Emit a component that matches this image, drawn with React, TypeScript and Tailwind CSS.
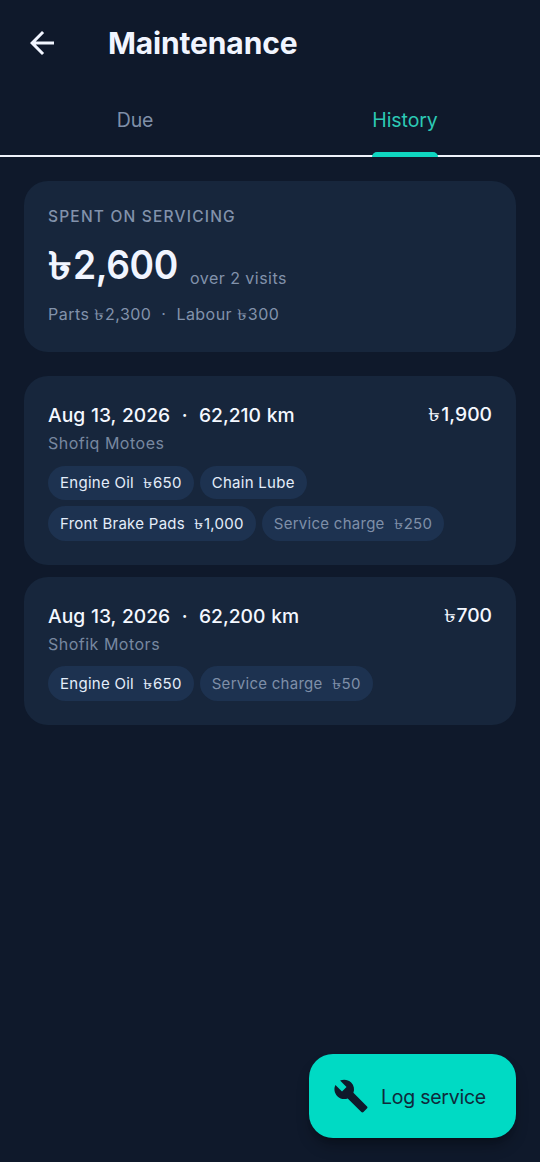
import { MdArrowBack, MdBuild } from "react-icons/md";
import clsx from "clsx";

interface ServiceItem {
  name: string;
  cost?: string;
  muted?: boolean;
}

interface Visit {
  date: string;
  odometer: string;
  garage: string;
  total: string;
  items: ServiceItem[];
}

const VISITS: Visit[] = [
  {
    date: "Aug 13, 2026",
    odometer: "62,210 km",
    garage: "Shofiq Motoes",
    total: "1,900",
    items: [
      { name: "Engine Oil", cost: "650" },
      { name: "Chain Lube" },
      { name: "Front Brake Pads", cost: "1,000" },
      { name: "Service charge", cost: "250", muted: true },
    ],
  },
  {
    date: "Aug 13, 2026",
    odometer: "62,200 km",
    garage: "Shofik Motors",
    total: "700",
    items: [
      { name: "Engine Oil", cost: "650" },
      { name: "Service charge", cost: "50", muted: true },
    ],
  },
];

// The fallback taka sign is narrow and tall, so it is widened to sit with the digits.
const Taka = ({ amount }: { amount: string }) => (
  <>
    <span className="inline-block w-[0.67em] origin-[0_75%] scale-x-[1.3] scale-y-[0.96]">
      ৳
    </span>
    {amount}
  </>
);

const ItemPill = ({ name, cost, muted }: ServiceItem) => (
  <span
    className={clsx(
      "flex items-center rounded-full bg-[#1d3250] px-3 text-[15px] tracking-[0.27px]",
      cost ? "h-[34.5px] pt-px" : "h-[33px] pt-[2px]",
      muted ? "text-[#7f8fa8]" : "text-[#e4edfa]"
    )}
  >
    <span className="whitespace-pre">
      {name}
      {cost && (
        <>
          {"  "}
          <Taka amount={cost} />
        </>
      )}
    </span>
  </span>
);

const VisitCard = ({ visit }: { visit: Visit }) => (
  <article className="rounded-3xl bg-[#17263c] p-6">
    <div className="flex items-start justify-between text-[19.25px] leading-[30px] font-medium text-[#f4f8ff]">
      <h2 className="whitespace-pre [word-spacing:0.6px]">
        {visit.date}  ·  {visit.odometer}
      </h2>
      <span className="leading-7">
        <Taka amount={visit.total} />
      </span>
    </div>
    <p className="text-[16px] leading-[27px] tracking-[0.5px] text-[#7888a0]">
      {visit.garage}
    </p>
    <div className="mt-[8.5px] flex flex-wrap items-start gap-1.5">
      {visit.items.map((item) => (
        <ItemPill key={item.name} {...item} />
      ))}
    </div>
  </article>
);

export default function App() {
  return (
    <div className="relative flex h-[1162px] w-[540px] flex-col overflow-hidden bg-[#0f192b] font-['Inter','Noto_Sans',sans-serif]">
      <header className="flex h-[84px] items-center pl-6">
        <button aria-label="Back" className="pt-px text-[#f1f5ff]">
          <MdArrowBack className="size-9" />
        </button>
        <h1 className="ml-12 pt-[2px] text-[30px] font-bold tracking-[-0.15px] text-[#f1f5ff]">
          Maintenance
        </h1>
      </header>
      <nav className="flex h-[73px] shrink-0 border-b-2 border-[#eef2fa] text-[19.5px] tracking-[-0.1px]">
        <button className="flex flex-1 justify-center pt-[21px] leading-[30px] text-[#7f8fa8]">
          <span>Due</span>
        </button>
        <button className="flex flex-1 justify-center text-[#2cc9b5]">
          <span className="relative h-[73px] pt-[21px] leading-[30px]">
            History
            <span className="absolute inset-x-0 bottom-0 h-[5px] rounded-t-[5px] bg-[#0fd6c0]" />
          </span>
        </button>
      </nav>
      <main className="flex flex-col px-6 pt-[23.5px]">
        <section className="mb-[24.5px] h-[171px] rounded-3xl bg-[#17263c] px-6 pt-6">
          <p className="text-[15.5px] leading-[23px] font-medium tracking-[1.2px] text-[#8292ab]">
            SPENT ON SERVICING
          </p>
          <div className="mt-2 flex h-[58px] items-end">
            <span className="w-[130px] origin-left scale-x-[0.93] text-[40px] leading-[58px] font-semibold tracking-[-0.4px] whitespace-nowrap text-[#f1f5ff]">
              <Taka amount="2,600" />
            </span>
            <span className="mb-1 ml-3 text-[16px] leading-6 tracking-[0.47px] text-[#8292ab]">
              over 2 visits
            </span>
          </div>
          <p className="mt-2 text-[16px] leading-6 tracking-[0.47px] whitespace-pre text-[#8292ab]">
            Parts <Taka amount="2,300" />
            {"  ·  "}Labour <Taka amount="300" />
          </p>
        </section>
        <div className="flex flex-col gap-3">
          {VISITS.map((visit) => (
            <VisitCard key={visit.odometer} visit={visit} />
          ))}
        </div>
      </main>
      <button className="absolute right-6 bottom-6 flex h-[84px] w-[207px] items-center rounded-3xl bg-[#00dac4] pl-6 text-[19.5px] tracking-[-0.25px] text-[#0f2a3b] shadow-lg shadow-black/30">
        <MdBuild className="mr-3 size-9 text-[#0f192b]" />
        <span className="pt-[3px]">Log service</span>
      </button>
    </div>
  );
}
